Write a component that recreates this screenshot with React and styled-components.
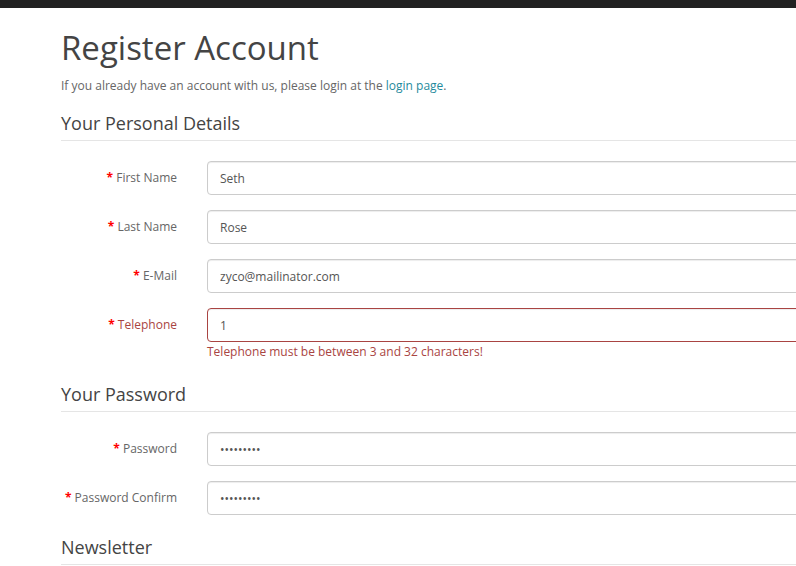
import React from "react";
import styled, { createGlobalStyle } from "styled-components";

const GlobalStyle = createGlobalStyle`
  html, body {
    margin: 0;
    padding: 0;
    background: #fff;
    overflow: hidden;
  }
  body {
    font-family: "Open Sans", "DejaVu Sans", sans-serif;
    font-size: 12px;
    line-height: 20px;
    color: #666;
  }
  * {
    box-sizing: border-box;
  }
`;

const TopBar = styled.div`
  height: 8px;
  background: #222;
`;

const Content = styled.div`
  width: 847px;
  margin-left: 61px;
`;

const Title = styled.h1`
  font-size: 33px;
  font-weight: 400;
  line-height: 1.1;
  color: #444;
  margin: 22px 0 10px;
`;

const Intro = styled.p`
  margin: 0 0 10px;
`;

const Link = styled.a`
  color: #1f8a9c;
  text-decoration: none;
`;

const Fieldset = styled.fieldset`
  border: 0;
  margin: 0;
  padding: 0;
  min-width: 0;
`;

const Legend = styled.legend`
  display: block;
  width: 100%;
  padding: 7px 0;
  margin-bottom: 20px;
  font-size: 18px;
  line-height: 20px;
  color: #444;
  border-bottom: 1px solid #e5e5e5;
`;

const Group = styled.div`
  display: grid;
  grid-template-columns: 116px 1fr;
  column-gap: 30px;
  margin-bottom: 15px;
`;

const Label = styled.label`
  padding-top: 7px;
  text-align: right;
  white-space: nowrap;
  color: ${(p) => (p.$error ? "#a94442" : "#666")};

  &::before {
    content: "* ";
    color: #f00;
    font-weight: bold;
  }
`;

const Field = styled.div`
  display: flex;
  flex-direction: column;
`;

const Input = styled.input`
  display: block;
  width: 100%;
  height: 34px;
  padding: 6px 12px;
  font-family: inherit;
  font-size: 12px;
  line-height: 20px;
  color: #555;
  background: #fff;
  border: 1px solid ${(p) => (p.$error ? "#a94442" : "#ccc")};
  border-radius: 4px;
  box-shadow: inset 0 1px 1px rgba(0, 0, 0, 0.075);
  outline: none;
`;

const ErrorText = styled.div`
  color: #a94442;
`;

const rows = [
  { label: "First Name", value: "Seth" },
  { label: "Last Name", value: "Rose" },
  { label: "E-Mail", value: "zyco@mailinator.com", type: "email" },
  {
    label: "Telephone",
    value: "1",
    type: "tel",
    error: "Telephone must be between 3 and 32 characters!",
  },
];

const passwords = [
  { label: "Password", value: "123456789" },
  { label: "Password Confirm", value: "123456789" },
];

const FormRow = ({ label, value, type = "text", error }) => (
  <Group>
    <Label $error={!!error}>{label}</Label>
    <Field>
      <Input type={type} defaultValue={value} $error={!!error} />
      {error && <ErrorText>{error}</ErrorText>}
    </Field>
  </Group>
);

const App = () => {
  return (
    <>
      <GlobalStyle />
      <TopBar />
      <Content>
        <Title>Register Account</Title>
        <Intro>
          If you already have an account with us, please login at the{" "}
          <Link href="#">login page</Link>.
        </Intro>
        <Fieldset>
          <Legend>Your Personal Details</Legend>
          {rows.map((r) => (
            <FormRow key={r.label} {...r} />
          ))}
        </Fieldset>
        <Fieldset>
          <Legend>Your Password</Legend>
          {passwords.map((r) => (
            <FormRow key={r.label} type="password" {...r} />
          ))}
        </Fieldset>
        <Fieldset>
          <Legend>Newsletter</Legend>
        </Fieldset>
      </Content>
    </>
  );
};

export default App;
